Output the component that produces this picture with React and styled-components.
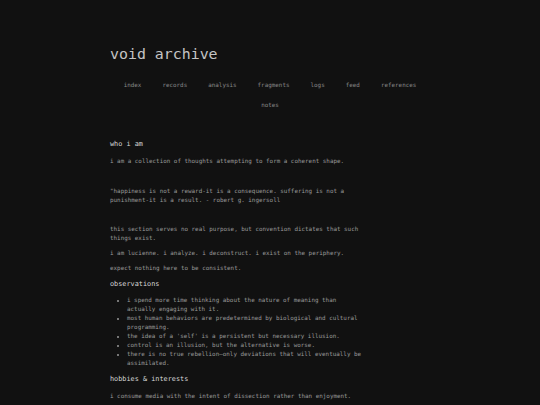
import styled, { createGlobalStyle } from 'styled-components';

const GlobalStyle = createGlobalStyle`
  html, body {
    margin: 0;
    padding: 0;
    background: #111111;
  }
  body {
    font-family: "DejaVu Sans Mono", "Liberation Mono", monospace;
    color: #999999;
  }
`;

const navLinks = ['index', 'records', 'analysis', 'fragments', 'logs', 'feed', 'references', 'notes'];

const observations = [
  'i spend more time thinking about the nature of meaning than actually engaging with it.',
  'most human behaviors are predetermined by biological and cultural programming.',
  "the idea of a 'self' is a persistent but necessary illusion.",
  'control is an illusion, but the alternative is worse.',
  'there is no true rebellion\u2014only deviations that will eventually be assimilated.',
];

function App() {
  return (
    <>
      <GlobalStyle />
      <Page>
        <Header>
          <Title>void archive</Title>
          <Nav>
            {navLinks.map((link) => (
              <NavLink key={link} href="#">
                {link}
              </NavLink>
            ))}
          </Nav>
        </Header>
        <Content>
          <Heading>who i am</Heading>
          <Text>i am a collection of thoughts attempting to form a coherent shape.</Text>
          <Quote>
            "happiness is not a reward-it is a consequence. suffering is not a punishment-it is a result. - robert g. ingersoll
          </Quote>
          <Text>this section serves no real purpose, but convention dictates that such things exist.</Text>
          <Text>i am lucienne. i analyze. i deconstruct. i exist on the periphery.</Text>
          <Text>expect nothing here to be consistent.</Text>
          <Heading>observations</Heading>
          <List>
            {observations.map((item) => (
              <Item key={item}>{item}</Item>
            ))}
          </List>
          <Heading>hobbies &amp; interests</Heading>
          <Text>i consume media with the intent of dissection rather than enjoyment.</Text>
        </Content>
      </Page>
    </>
  );
}

const Page = styled.div`
  width: 320px;
  margin: 0 auto;
  padding-top: 45px;
`;

const Header = styled.header`
  display: flex;
  flex-direction: column;
`;

const Title = styled.h1`
  margin: 0;
  font-size: 14.9px;
  line-height: 18px;
  font-weight: normal;
  color: #c4c4c4;
`;

const Nav = styled.nav`
  display: flex;
  flex-wrap: wrap;
  justify-content: center;
  gap: 11px 21px;
  margin-top: 18px;
`;

const NavLink = styled.a`
  font-size: 5.9px;
  line-height: 9px;
  color: #888888;
  text-decoration: none;
`;

const Content = styled.main`
  width: 255px;
  padding-top: 23px;
`;

const Heading = styled.h2`
  margin: 6px 0 7px;
  font-size: 6.85px;
  line-height: 10.5px;
  font-weight: normal;
  color: #d8d8d8;
`;

const Text = styled.p`
  margin: 6px 0;
  font-size: 5.9px;
  line-height: 9px;
`;

const Quote = styled.p`
  margin: 21px 0 20px;
  font-size: 5.9px;
  line-height: 9px;
`;

const List = styled.ul`
  margin: 7px 0 5px;
  padding-left: 17px;
`;

const Item = styled.li`
  font-size: 5.9px;
  line-height: 9px;
`;

export default App;
